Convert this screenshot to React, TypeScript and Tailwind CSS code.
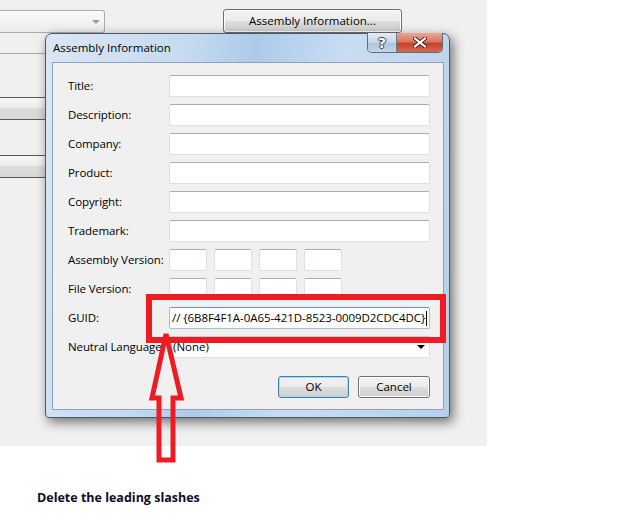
const rows = ['Title:', 'Description:', 'Company:', 'Product:', 'Copyright:', 'Trademark:'];

function TextBox({ className = '' }: { className?: string }) {
  return (
    <div
      className={`h-[22px] bg-white border border-[#dbdfe6] border-t-[#abadb3] rounded-[2px] ${className}`}
    />
  );
}

function VersionBoxes() {
  return (
    <div className="flex gap-[7px]">
      {[0, 1, 2, 3].map((i) => (
        <TextBox key={i} className="w-[38px]" />
      ))}
    </div>
  );
}

function Button({ label, primary = false }: { label: string; primary?: boolean }) {
  return (
    <div
      className={`h-[22px] flex items-center justify-center rounded-[3px] border bg-[linear-gradient(#f2f2f2_0%,#ebebeb_50%,#dddddd_50%,#cfcfcf_100%)] ${
        primary
          ? 'w-[71px] border-[#3c7fb1] shadow-[inset_0_0_0_1px_#a9dbf6]'
          : 'w-[72px] border-[#707070] shadow-[inset_0_0_0_1px_#fcfcfc]'
      }`}
    >
      {label}
    </div>
  );
}

function Row({ label, children }: { label: string; children: React.ReactNode }) {
  return (
    <div className="flex items-center h-[22px]">
      <div className="w-[101px] shrink-0 whitespace-nowrap tracking-[-0.1px]">{label}</div>
      {children}
    </div>
  );
}

function Dialog() {
  return (
    <div className="absolute left-[45px] top-[33px] w-[405px] h-[385px] rounded-t-[7px] rounded-b-[4px] border border-[#4d5866] bg-[linear-gradient(100deg,#d9e6f4_0%,#c6dbf0_30%,#aecbea_45%,#c9ddf2_65%,#b7d0ea_100%)] shadow-[3px_4px_12px_rgba(0,0,0,0.55)] text-[11.5px] text-black">
      <div className="h-[28px] flex items-start pl-[7px]">
        <div className="mt-[5px] text-[11.5px] text-black">Assembly Information</div>
        <div className="ml-auto mr-[6px] -mt-px flex h-[20px] border border-[#5f6c7b] border-t-0 rounded-b-[5px] overflow-hidden">
          <div className="w-[29px] flex items-center justify-center bg-[linear-gradient(#e4ecf6,#c7d6e7_50%,#b0c3d9_51%,#c5d5e6)] border-r border-[#6d7a89] text-white font-bold text-[14px] leading-none font-['DejaVu_Sans',sans-serif] [text-shadow:1px_0_0_#33414f,-1px_0_0_#33414f,0_1px_0_#33414f,0_-1px_0_#33414f]">
            ?
          </div>
          <div className="w-[45px] flex items-center justify-center bg-[linear-gradient(#e8a797,#d9765f_45%,#c5412a_55%,#d66a52)]">
            <svg width="14" height="11" viewBox="0 0 14 11">
              <path d="M2 1.5 L12 9.5 M12 1.5 L2 9.5" stroke="#4a1a12" strokeWidth="4" strokeLinecap="square" />
              <path d="M2 1.5 L12 9.5 M12 1.5 L2 9.5" stroke="#ffffff" strokeWidth="2.2" strokeLinecap="square" />
            </svg>
          </div>
        </div>
      </div>
      <div className="ml-[6px] w-[392px] h-[348px] border border-[#8da2ba] bg-[#f0f0f0] pl-[15px] pr-[13px] pt-[12px]">
        <div className="flex flex-col gap-[7px]">
          {rows.map((r) => (
            <Row key={r} label={r}>
              <TextBox className="flex-1" />
            </Row>
          ))}
          <Row label="Assembly Version:">
            <VersionBoxes />
          </Row>
          <Row label="File Version:">
            <VersionBoxes />
          </Row>
          <Row label="GUID:">
            <div className="flex-1 h-[22px] bg-white border border-[#a7c0da] border-t-[#6f94bb] rounded-[2px] flex items-center pl-[2px] whitespace-nowrap overflow-hidden">
              <span className="text-[11.5px] tracking-[-0.05px]">// {'{'}6B8F4F1A-0A65-421D-8523-0009D2CDC4DC{'}'}</span>
              <span className="w-px h-[15px] bg-black ml-px" />
            </div>
          </Row>
          <Row label="Neutral Language:">
            <div className="flex-1 h-[22px] bg-white border border-[#dbdfe6] border-t-[#c9cbd1] rounded-[2px] flex items-center pl-[3px] pr-[4px]">
              <span>(None)</span>
              <span className="ml-auto w-0 h-0 border-x-[4px] border-x-transparent border-t-[4px] border-t-black" />
            </div>
          </Row>
        </div>
        <div className="mt-[18px] flex justify-end gap-[9px]">
          <Button label="OK" primary />
          <Button label="Cancel" />
        </div>
      </div>
    </div>
  );
}

function Annotation() {
  return (
    <svg className="absolute left-0 top-0 pointer-events-none" width="637" height="520" viewBox="0 0 637 520">
      <rect x="149" y="297" width="294" height="43" fill="none" stroke="#ed1c24" strokeWidth="6" />
      <polygon
        points="166,334 152,398 159,398 159,460 173,460 173,398 181,398"
        fill="none"
        stroke="#ed1c24"
        strokeWidth="5"
        strokeLinejoin="miter"
      />
    </svg>
  );
}

export default function App() {
  return (
    <div className="relative w-[637px] h-[520px] bg-white overflow-hidden font-['Open_Sans',sans-serif] text-black">
      <div className="w-[487px] h-[446px] bg-[#f0f0f0] pt-[9px]">
        <div className="flex items-start">
          <div className="mt-px w-[105px] h-[23px] border border-l-0 border-[#acacac] rounded-r-[3px] bg-[linear-gradient(#fafafa,#ececec)] flex items-center justify-end pr-[4px]">
            <span className="w-0 h-0 border-x-[4px] border-x-transparent border-t-[4px] border-t-[#9a9a9a]" />
          </div>
          <div className="ml-[118px] w-[179px] h-[24px] flex items-center justify-center rounded-[3px] border border-[#707070] shadow-[inset_0_0_0_1px_#fcfcfc] bg-[linear-gradient(#f2f2f2_0%,#ebebeb_50%,#dddddd_50%,#cfcfcf_100%)] text-[11.5px]">
            Assembly Information...
          </div>
        </div>
        <div className="mt-[20px] w-[45px] h-px bg-[#a8a8a8]" />
        <div className="mt-[43px] w-[45px] h-[23px] border-y border-[#5a5a5a] bg-[linear-gradient(#f7f7f7_0%,#ededed_45%,#dcdcdc_50%,#d8d8d8_100%)]" />
        <div className="mt-[35px] w-[45px] h-[23px] border-y border-[#5a5a5a] bg-[linear-gradient(#f7f7f7_0%,#ededed_45%,#dcdcdc_50%,#d8d8d8_100%)]" />
      </div>
      <p className="pl-[37px] mt-[44px] text-[12.5px] leading-[16px] font-bold text-[#0d0d26]">
        Delete the leading slashes
      </p>
      <Dialog />
      <Annotation />
    </div>
  );
}
